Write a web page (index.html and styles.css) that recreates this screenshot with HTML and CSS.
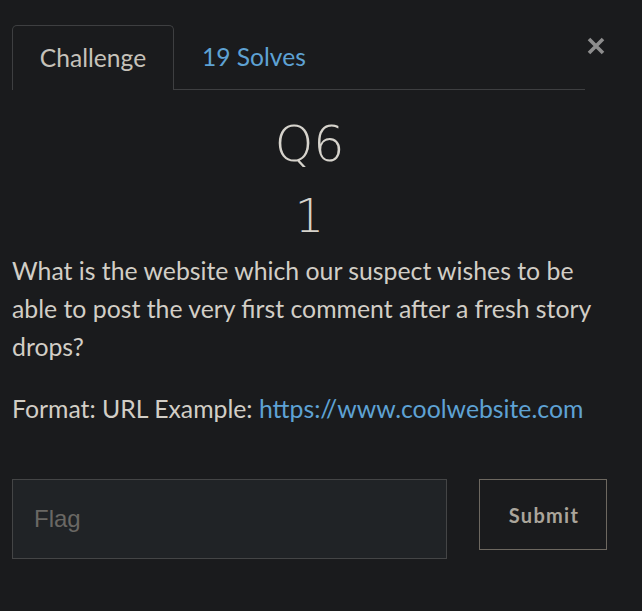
FILE: index.html
```html
<!DOCTYPE html>
<html>
<head>
<meta charset="utf-8">
<link rel="stylesheet" href="styles.css">
</head>
<body>
<div class="modal">
  <div class="top">
    <ul class="tabs">
      <li class="tab active">Challenge</li>
      <li class="tab link">19 Solves</li>
    </ul>
    <button class="close" aria-label="Close">
      <svg width="18" height="18" viewBox="0 0 18 18"><path d="M2 2 L16 16 M16 2 L2 16" stroke="#8d8d8d" stroke-width="3.6" stroke-linecap="butt"/></svg>
    </button>
  </div>
  <h2 class="title">Q6</h2>
  <h3 class="value">1</h3>
  <p class="desc">What is the website which our suspect wishes to be able to post the very first comment after a fresh story drops?</p>
  <p class="desc fmt">Format: URL Example: <a href="#">https://www.coolwebsite.com</a></p>
  <form class="flag-row">
    <input class="flag" type="text" placeholder="Flag">
    <button class="submit" type="button">Submit</button>
  </form>
</div>
</body>
</html>
```
FILE: styles.css
```css
html, body { margin: 0; padding: 0; }
body {
  background: #1a1b1d;
  width: 642px;
  height: 611px;
  overflow: hidden;
  font-family: Lato, "Liberation Sans", sans-serif;
  color: #d2cec6;
}
.modal { padding: 25px 35px 0 12px; }
.top { display: flex; align-items: flex-start; }
.tabs {
  list-style: none; margin: 0; padding: 0;
  display: flex;
  width: 573px;
  flex: none;
  border-bottom: 1px solid #3e3f41;
  height: 64px;
}
.tab {
  font-size: 24.6px;
  height: 64px;
  box-sizing: border-box;
  display: flex; align-items: center;
  padding: 0 25px 1px 25px;
}
.tab.active {
  border: 1px solid #3e3f41;
  border-bottom: none;
  border-radius: 5px 5px 0 0;
  height: 65px;
  color: #c6c2ba;
  background: #1a1b1d;
  width: 162px;
  justify-content: center;
  padding: 0 0 2px 0;
}
.tab.link { color: #5ea2d4; padding-left: 28px; }
.close {
  background: none; border: none; padding: 0;
  margin: 12px 0 0 2px;
  width: 18px; height: 18px;
  flex: none;
  display: block;
}
.close svg { display: block; }
.title {
  font-family: "DejaVu Sans", sans-serif;
  font-weight: 200;
  font-size: 49px;
  text-align: center;
  margin: 29px 0 0 0;
  line-height: 52px;
  color: #d6d3cc;
}
.value {
  font-family: "DejaVu Sans", sans-serif;
  font-weight: 200;
  font-size: 46px;
  text-align: center;
  margin: 19px 0 0 0;
  line-height: 52px;
  color: #d6d3cc;
}
.desc {
  font-size: 24.8px;
  line-height: 38px;
  margin: 10px 0 0 0;
  padding-right: 10px;
}
.fmt { margin-top: 24px; }
.fmt a { color: #5ea2d4; text-decoration: none; }
.flag-row { display: flex; align-items: flex-start; gap: 32px; margin-top: 51px; }
.flag {
  flex: none;
  width: 435px; height: 80px; box-sizing: border-box;
  background: #202326; border: 1px solid #444546;
  padding: 0 21px;
  font-family: "Liberation Sans", sans-serif;
  font-size: 24px;
  color: #d2cec6;
  outline: none;
}
.flag::placeholder { color: #6a6864; }
.submit {
  flex: none;
  width: 128px; height: 71px; box-sizing: border-box;
  background: #1a1b1d; border: 1px solid #6d6860;
  color: #aaa59b;
  font-family: Lato, sans-serif; font-weight: 700;
  font-size: 20px; letter-spacing: 1.3px;
  padding: 0 0 0 2px;
}
```
